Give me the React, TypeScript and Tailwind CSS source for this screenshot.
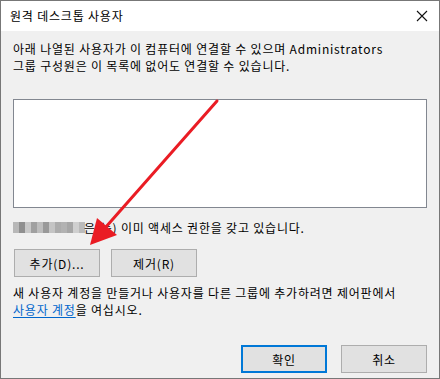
import React from "react";

const font = {
  fontFamily: '"Noto Sans CJK KR", "Noto Sans", sans-serif',
};

const blur = [
  "#b8b8b8", "#8f8f8f", "#c8c8c8", "#a0a0a0", "#bdbdbd", "#999999", "#c4c4c4",
  "#acacac", "#b2b2b2", "#a6a6a6", "#cfcfcf", "#bababa",
];

const Btn = ({ label, primary }: { label: string; primary?: boolean }) => (
  <div
    className={
      "flex h-[28px] w-[86px] items-center justify-center bg-[#e1e1e1] text-[12px] text-black " +
      (primary ? "border-2 border-[#0078d7]" : "border border-[#adadad]")
    }
  >
    {label}
  </div>
);

export default function App() {
  return (
    <div
      className="relative flex h-[379px] w-[440px] flex-col border border-[#777777] bg-[#f0f0f0] text-black tracking-[0.8px]"
      style={font}
    >
      <div className="flex h-[30px] items-center justify-between bg-white pl-[9px] pr-[10px] text-[12px]">
        <span>원격 데스크톱 사용자</span>
        <svg width="12" height="12" viewBox="0 0 12 12" className="mr-[1px]">
          <path d="M1 1 L11 11 M11 1 L1 11" stroke="#111" strokeWidth="1.1" />
        </svg>
      </div>

      <div className="flex flex-1 flex-col px-[12px] pt-[9px] text-[12px] leading-[17px]">
        <p>
          아래 나열된 사용자가 이 컴퓨터에 연결할 수 있으며 Administrators
          <br />
          그룹 구성원은 이 목록에 없어도 연결할 수 있습니다.
        </p>

        <div className="mt-[25px] h-[109px] w-[414px] border border-[#828790] bg-white" />

        <div className="mt-[11px] flex h-[17px] items-center">
          <div className="flex h-[11px]">
            {blur.map((c, i) => (
              <div key={i} className="h-full w-[6px]" style={{ background: c }} />
            ))}
          </div>
          <span className="ml-[-1px]">은(는) 이미 액세스 권한을 갖고 있습니다.</span>
        </div>

        <div className="mt-[13px] flex gap-[11px] pl-[1px]">
          <Btn label="추가(D)..." />
          <Btn label="제거(R)" />
        </div>

        <p className="mt-[7px]">
          새 사용자 계정을 만들거나 사용자를 다른 그룹에 추가하려면 제어판에서
          <br />
          <span className="text-[#0066cc] underline underline-offset-2">사용자 계정</span>을 여십시오.
        </p>

        <div className="mt-auto mb-[5px] flex justify-end gap-[14px]">
          <Btn label="확인" primary />
          <Btn label="취소" />
        </div>
      </div>

      <svg
        className="pointer-events-none absolute left-0 top-0"
        width="440"
        height="379"
        viewBox="-1 -1 440 379"
      >
        <line x1="215" y1="99" x2="103" y2="226" stroke="#ea1c24" strokeWidth="3" strokeLinecap="round" />
        <polygon points="88,243 95,216 115,233" fill="#ea1c24" />
      </svg>
    </div>
  );
}
